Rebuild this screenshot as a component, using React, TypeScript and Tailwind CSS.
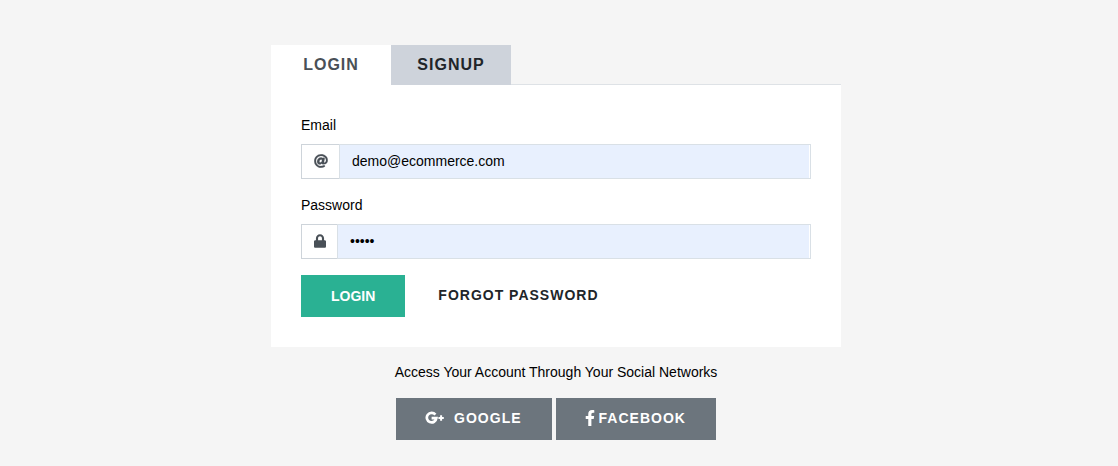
import { useState } from "react";
import type { ReactNode } from "react";
import { FaAt, FaLock, FaFacebookF } from "react-icons/fa";

function GooglePlusIcon({ className }: { className: string }) {
  return (
    <svg viewBox="0 0 19 14" className={className} fill="none" stroke="currentColor" aria-hidden="true">
      <path d="M10.4 3.6A4.8 4.8 0 1 0 11.4 7.2H6.6" strokeWidth="2.7" />
      <path d="M13.4 7h5.4M16.1 4.3v5.4" strokeWidth="2" />
    </svg>
  );
}

type FieldProps = {
  id: string;
  label: string;
  type: string;
  initial: string;
  icon: ReactNode;
};

function Field({ id, label, type, initial, icon }: FieldProps) {
  const [value, setValue] = useState(initial);
  return (
    <div className="mb-4">
      <label htmlFor={id} className="mb-2 block">
        {label}
      </label>
      <div className="flex h-[35px]">
        <span className="flex items-center border border-r-0 border-[#ced4da] bg-white px-3 pb-0.5 text-[#495057]">
          {icon}
        </span>
        <div className="-ml-px flex min-w-0 flex-1 border border-[#d9e0e6] bg-white pr-px">
          <input
            id={id}
            type={type}
            value={value}
            onChange={(event) => setValue(event.target.value)}
            className="w-full min-w-0 bg-[#e8f0fe] px-3 text-black outline-none"
          />
        </div>
      </div>
    </div>
  );
}

export default function App() {
  return (
    <main className="min-h-screen bg-[#f5f5f5] pt-[45px] pr-1.5 pb-6 font-['Liberation_Sans',Arial,sans-serif] text-sm leading-[21px] text-black">
      <div className="mx-auto max-w-[570px]">
        <div role="tablist" className="flex text-base font-bold tracking-[1px]">
          <button
            type="button"
            role="tab"
            aria-selected="true"
            className="h-10 w-[120px] bg-white text-[#495057]"
          >
            LOGIN
          </button>
          <button
            type="button"
            role="tab"
            aria-selected="false"
            className="h-10 w-[120px] bg-[#ced3db] text-[#212529]"
          >
            SIGNUP
          </button>
          <div className="flex-1 border-b border-[#dee2e6]" />
        </div>

        <form className="bg-white p-[30px]" onSubmit={(event) => event.preventDefault()}>
          <Field
            id="email"
            label="Email"
            type="email"
            initial="demo@ecommerce.com"
            icon={<FaAt className="h-3.5 w-3.5" stroke="currentColor" strokeWidth={8} />}
          />
          <Field
            id="password"
            label="Password"
            type="password"
            initial="demo1"
            icon={<FaLock className="h-3.5 w-3" />}
          />
          <div className="flex font-bold">
            <button type="submit" className="h-[42px] bg-[#2ab193] px-[30px] text-white">
              LOGIN
            </button>
            <a href="#forgot" className="ml-[33px] py-2.5 tracking-[1px] text-[#212529]">
              FORGOT PASSWORD
            </a>
          </div>
        </form>

        <p className="py-[15px] text-center">Access Your Account Through Your Social Networks</p>

        <div className="flex justify-center gap-1 font-bold tracking-[1px] text-white">
          <button
            type="button"
            className="flex h-[42px] items-center bg-[#6c757d] pr-[30px] pb-0.5 pl-[29px]"
          >
            <GooglePlusIcon className="mr-2.5 h-3.5 w-[19px]" />
            GOOGLE
          </button>
          <button
            type="button"
            className="flex h-[42px] items-center bg-[#6c757d] pr-[30px] pb-0.5 pl-[29px]"
          >
            <FaFacebookF className="mr-1 h-4 w-2.5" />
            FACEBOOK
          </button>
        </div>
      </div>
    </main>
  );
}
